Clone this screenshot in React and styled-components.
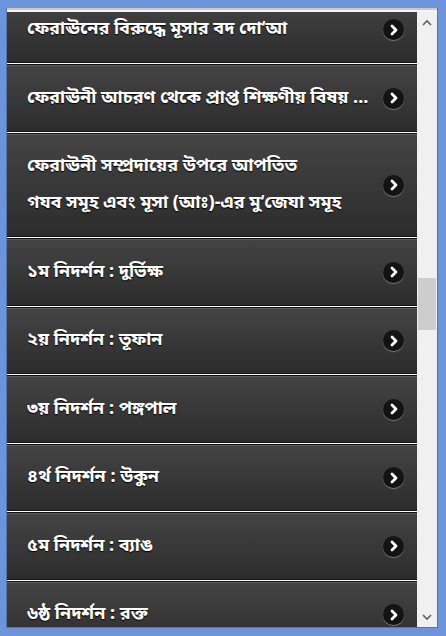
import React from 'react';
import styled, { createGlobalStyle } from 'styled-components';

const GlobalStyle = createGlobalStyle`
  html, body {
    margin: 0;
    padding: 0;
    background: #6d94db;
  }
  * {
    box-sizing: border-box;
  }
`;

// Marco azul de la ventana
const Frame = styled.div`
  width: 446px;
  height: 636px;
  padding: 8px 8px 8px 6px;
  background: #6d94db;
`;

const Window = styled.div`
  height: 100%;
  display: flex;
  flex-direction: column;
  border-left: 1px solid #4f74b9;
  border-right: 1px solid #4f74b9;
  border-bottom: 1px solid #4f74b9;
  background: #f0f0f0;
`;

const TopStrip = styled.div`
  height: 4px;
  border-top: 2px solid #c9c9c9;
  background: #f4f4f4;
`;

const Body = styled.div`
  flex: 1;
  display: flex;
  min-height: 0;
`;

const Viewport = styled.div`
  flex: 1;
  overflow: hidden;
  background: #fff;
`;

// La lista está desplazada, por eso la primera fila queda cortada
const List = styled.ul`
  list-style: none;
  margin: -16.25px 0 0;
  padding: 0;
  display: flex;
  flex-direction: column;
  gap: 1px;
`;

const Row = styled.li`
  display: flex;
  align-items: center;
  gap: 12px;
  padding: 14.25px 13px 14.25px 20px;
  background: linear-gradient(#444444, #2c2c2c);
  border-top: 1px solid #111;
  border-bottom: 1px solid #111;
  box-shadow: inset 0 1px 0 #5c5c5c;
`;

const Label = styled.span`
  flex: 1;
  min-width: 0;
  color: #fff;
  font-family: "Noto Sans Bengali", "Noto Sans", "Liberation Sans", sans-serif;
  font-size: 18px;
  font-weight: 700;
  line-height: 37px;
  white-space: nowrap;
  overflow: hidden;
  text-overflow: ellipsis;
  text-shadow: 0 1px 1px #000;
`;

const ArrowBadge = styled.span`
  flex: none;
  width: 21px;
  height: 21px;
  border-radius: 50%;
  display: flex;
  align-items: center;
  justify-content: center;
  background: rgba(0, 0, 0, 0.65);
  box-shadow: 0 1px 1px rgba(255, 255, 255, 0.35);
`;

// Barra de desplazamiento dibujada
const Scrollbar = styled.div`
  width: 20px;
  display: flex;
  flex-direction: column;
  align-items: center;
  background: #f0f0f0;
`;

const ScrollButton = styled.div`
  height: 20px;
  width: 100%;
  display: flex;
  align-items: center;
  justify-content: center;
`;

const Track = styled.div`
  flex: 1;
  width: 100%;
  padding: 0 1px;
`;

const Thumb = styled.div`
  margin-top: ${({ $offset }) => $offset}px;
  height: ${({ $size }) => $size}px;
  background: #cdcdcd;
`;

const items = [
  ['ফেরাঊনের বিরুদ্ধে মূসার বদ দো‘আ'],
  ['ফেরাঊনী আচরণ থেকে প্রাপ্ত শিক্ষণীয় বিষয় ...'],
  ['ফেরাঊনী সম্প্রদায়ের উপরে আপতিত', 'গযব সমূহ এবং মূসা (আঃ)-এর মু‘জেযা সমূহ'],
  ['১ম নিদর্শন : দুর্ভিক্ষ'],
  ['২য় নিদর্শন : তূফান'],
  ['৩য় নিদর্শন : পঙ্গপাল'],
  ['৪র্থ নিদর্শন : উকুন'],
  ['৫ম নিদর্শন : ব্যাঙ'],
  ['৬ষ্ঠ নিদর্শন : রক্ত'],
];

function Chevron() {
  return (
    <svg width="10" height="12" viewBox="0 0 10 12">
      <path d="M3 2 L7 6 L3 10" fill="none" stroke="#fff" strokeWidth="2.8" strokeLinecap="round" strokeLinejoin="round" />
    </svg>
  );
}

function ScrollArrow({ up }) {
  return (
    <svg width="10" height="7" viewBox="0 0 10 7">
      <path
        d={up ? 'M1 6 L5 2 L9 6' : 'M1 1 L5 5 L9 1'}
        fill="none"
        stroke="#606060"
        strokeWidth="1.6"
      />
    </svg>
  );
}

export default function App() {
  return (
    <>
      <GlobalStyle />
      <Frame>
        <Window>
          <TopStrip />
          <Body>
            <Viewport>
              <List>
                {items.map((lines, i) => (
                  <Row key={i}>
                    <Label>
                      {lines.map((line, j) => (
                        <React.Fragment key={j}>
                          {j > 0 && <br />}
                          {line}
                        </React.Fragment>
                      ))}
                    </Label>
                    <ArrowBadge>
                      <Chevron />
                    </ArrowBadge>
                  </Row>
                ))}
              </List>
            </Viewport>
            <Scrollbar>
              <ScrollButton>
                <ScrollArrow up />
              </ScrollButton>
              <Track>
                <Thumb $offset={246} $size={52} />
              </Track>
              <ScrollButton>
                <ScrollArrow />
              </ScrollButton>
            </Scrollbar>
          </Body>
        </Window>
      </Frame>
    </>
  );
}
